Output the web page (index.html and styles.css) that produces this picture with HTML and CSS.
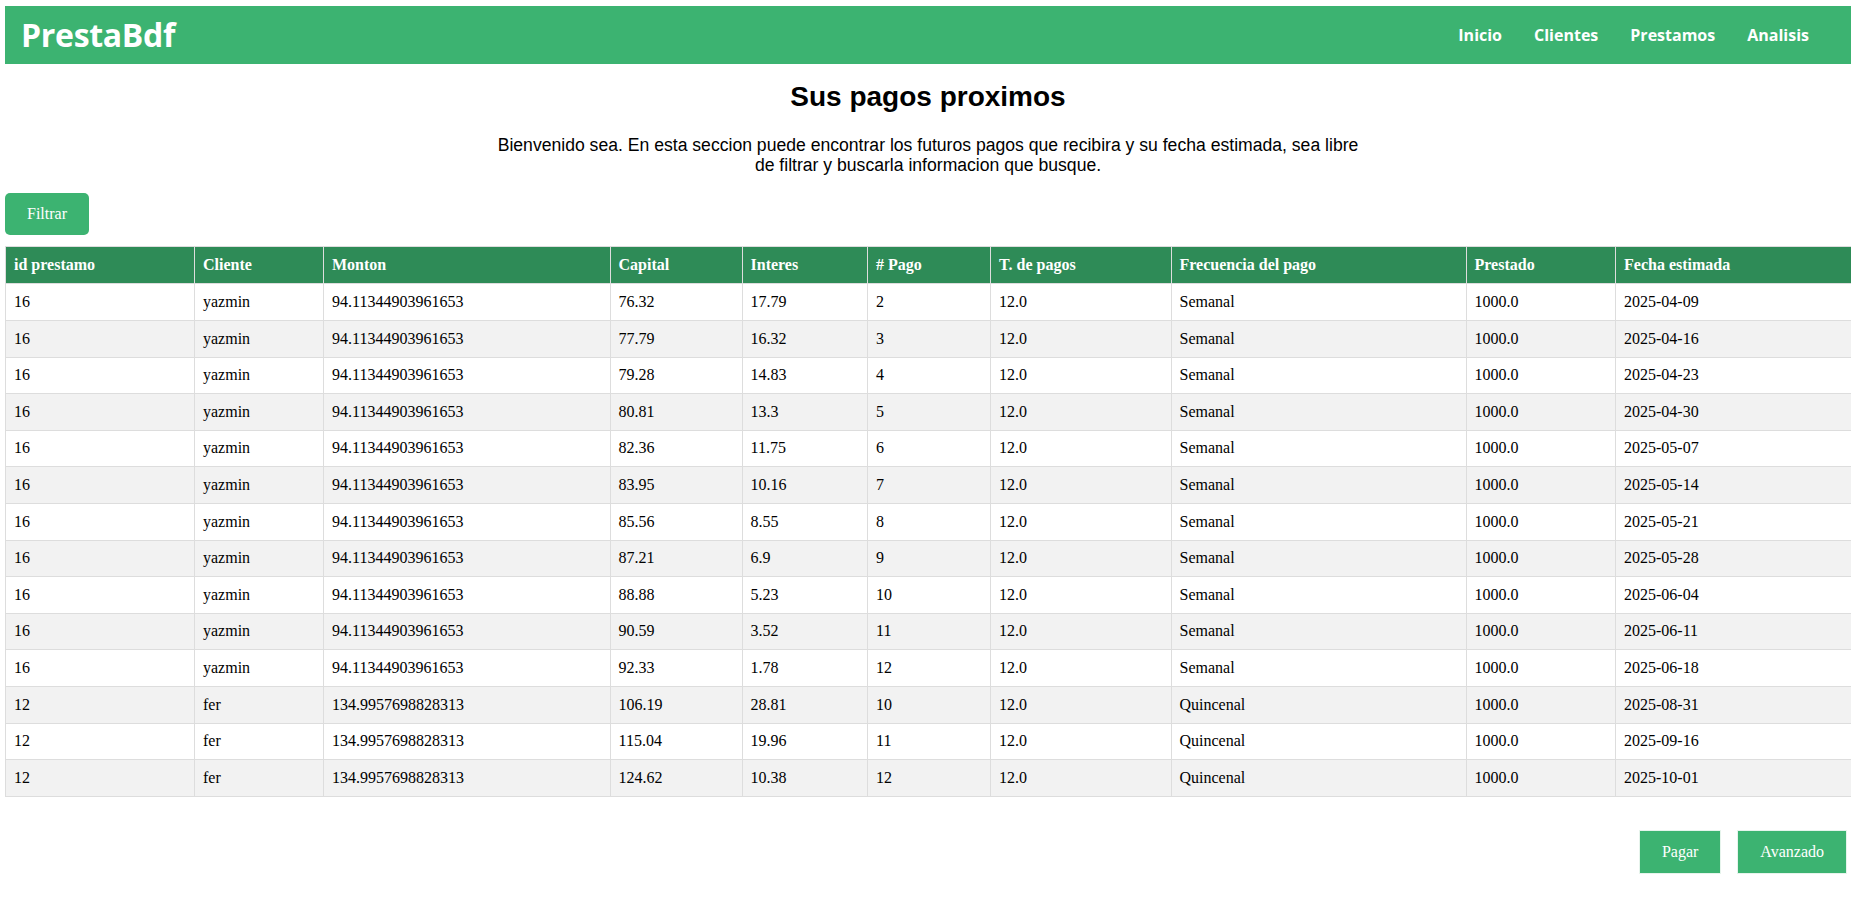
FILE: index.html
```html
<!DOCTYPE html>
<html lang="es">
<head>
<meta charset="utf-8">
<title>PrestaBdf</title>
<link rel="stylesheet" href="styles.css">
</head>
<body>
<header class="topbar">
  <div class="logo">PrestaBdf</div>
  <nav class="nav">
    <a href="#">Inicio</a>
    <a href="#">Clientes</a>
    <a href="#">Prestamos</a>
    <a href="#">Analisis</a>
  </nav>
</header>
<main>
  <section class="intro">
    <h1 class="title">Sus pagos proximos</h1>
    <p class="lead">Bienvenido sea. En esta seccion puede encontrar los futuros pagos que recibira y su fecha estimada, sea libre de filtrar y buscarla informacion que busque.</p>
  </section>
  <div class="toolbar"><button class="btn btn-round">Filtrar</button></div>
  <table class="pagos">
    <colgroup>
      <col class="c1"><col class="c2"><col class="c3"><col class="c4"><col class="c5"><col class="c6"><col class="c7"><col class="c8"><col class="c9"><col class="c10">
    </colgroup>
    <thead>
      <tr><th>id prestamo</th><th>Cliente</th><th>Monton</th><th>Capital</th><th>Interes</th><th># Pago</th><th>T. de pagos</th><th>Frecuencia del pago</th><th>Prestado</th><th>Fecha estimada</th></tr>
    </thead>
    <tbody>
      <tr><td>16</td><td>yazmin</td><td>94.11344903961653</td><td>76.32</td><td>17.79</td><td>2</td><td>12.0</td><td>Semanal</td><td>1000.0</td><td>2025-04-09</td></tr>
      <tr><td>16</td><td>yazmin</td><td>94.11344903961653</td><td>77.79</td><td>16.32</td><td>3</td><td>12.0</td><td>Semanal</td><td>1000.0</td><td>2025-04-16</td></tr>
      <tr><td>16</td><td>yazmin</td><td>94.11344903961653</td><td>79.28</td><td>14.83</td><td>4</td><td>12.0</td><td>Semanal</td><td>1000.0</td><td>2025-04-23</td></tr>
      <tr><td>16</td><td>yazmin</td><td>94.11344903961653</td><td>80.81</td><td>13.3</td><td>5</td><td>12.0</td><td>Semanal</td><td>1000.0</td><td>2025-04-30</td></tr>
      <tr><td>16</td><td>yazmin</td><td>94.11344903961653</td><td>82.36</td><td>11.75</td><td>6</td><td>12.0</td><td>Semanal</td><td>1000.0</td><td>2025-05-07</td></tr>
      <tr><td>16</td><td>yazmin</td><td>94.11344903961653</td><td>83.95</td><td>10.16</td><td>7</td><td>12.0</td><td>Semanal</td><td>1000.0</td><td>2025-05-14</td></tr>
      <tr><td>16</td><td>yazmin</td><td>94.11344903961653</td><td>85.56</td><td>8.55</td><td>8</td><td>12.0</td><td>Semanal</td><td>1000.0</td><td>2025-05-21</td></tr>
      <tr><td>16</td><td>yazmin</td><td>94.11344903961653</td><td>87.21</td><td>6.9</td><td>9</td><td>12.0</td><td>Semanal</td><td>1000.0</td><td>2025-05-28</td></tr>
      <tr><td>16</td><td>yazmin</td><td>94.11344903961653</td><td>88.88</td><td>5.23</td><td>10</td><td>12.0</td><td>Semanal</td><td>1000.0</td><td>2025-06-04</td></tr>
      <tr><td>16</td><td>yazmin</td><td>94.11344903961653</td><td>90.59</td><td>3.52</td><td>11</td><td>12.0</td><td>Semanal</td><td>1000.0</td><td>2025-06-11</td></tr>
      <tr><td>16</td><td>yazmin</td><td>94.11344903961653</td><td>92.33</td><td>1.78</td><td>12</td><td>12.0</td><td>Semanal</td><td>1000.0</td><td>2025-06-18</td></tr>
      <tr><td>12</td><td>fer</td><td>134.9957698828313</td><td>106.19</td><td>28.81</td><td>10</td><td>12.0</td><td>Quincenal</td><td>1000.0</td><td>2025-08-31</td></tr>
      <tr><td>12</td><td>fer</td><td>134.9957698828313</td><td>115.04</td><td>19.96</td><td>11</td><td>12.0</td><td>Quincenal</td><td>1000.0</td><td>2025-09-16</td></tr>
      <tr><td>12</td><td>fer</td><td>134.9957698828313</td><td>124.62</td><td>10.38</td><td>12</td><td>12.0</td><td>Quincenal</td><td>1000.0</td><td>2025-10-01</td></tr>
    </tbody>
  </table>
  <div class="actions">
    <button class="btn btn-square">Pagar</button>
    <button class="btn btn-square">Avanzado</button>
  </div>
</main>
</body>
</html>
```
FILE: styles.css
```css
html, body {
  overflow: hidden;
}
body {
  margin: 6px 0 0 5px;
  font-family: "Liberation Serif", "Times New Roman", serif;
  font-size: 16px;
  color: #000;
  background: #fff;
}
.topbar {
  height: 58px;
  background: #3cb371;
  display: flex;
  align-items: center;
  justify-content: space-between;
  padding: 0 42px 0 16px;
}
.logo {
  font-family: "Open Sans", "Noto Sans", sans-serif;
  font-weight: 700;
  font-size: 32px;
  color: #fff;
  letter-spacing: -0.3px;
  line-height: 1;
}
.nav {
  display: flex;
  gap: 32px;
}
.nav a {
  font-family: "Open Sans", "Noto Sans", sans-serif;
  font-weight: 700;
  font-size: 16px;
  color: #fff;
  text-decoration: none;
}
.intro {
  display: flex;
  flex-direction: column;
  align-items: center;
  text-align: center;
  font-family: "Liberation Sans", Arial, sans-serif;
}
.title {
  margin: 17px 0 0;
  font-size: 28px;
  font-weight: 700;
  line-height: 32px;
}
.lead {
  max-width: 880px;
  margin: 22px 0 0;
  font-size: 17.6px;
  line-height: 20px;
}
.toolbar {
  display: flex;
  margin-top: 18px;
}
.btn {
  font-family: "Liberation Serif", "Times New Roman", serif;
  font-size: 16px;
  color: #fff;
  background: #3cb371;
  cursor: pointer;
}
.btn-round {
  border: none;
  border-radius: 5px;
  height: 42px;
  padding: 0 22px;
}
.pagos {
  margin-top: 11px;
  width: 1846px;
  border-collapse: collapse;
  table-layout: fixed;
}
.c1 { width: 189px; }
.c2 { width: 129px; }
.c3 { width: 286.5px; }
.c4 { width: 132px; }
.c5 { width: 125.5px; }
.c6 { width: 123px; }
.c7 { width: 180.5px; }
.c8 { width: 295px; }
.c9 { width: 149.5px; }
.c10 { width: 236px; }
.pagos th, .pagos td {
  border: 1px solid #ddd;
  padding: 8.6px 8px;
  line-height: 18.4px;
  text-align: left;
  white-space: nowrap;
  overflow: hidden;
}
.pagos th {
  background: #2e8b57;
  color: #fff;
  font-weight: 700;
  padding-top: 9px;
  padding-bottom: 9px;
}
.pagos tbody tr:nth-child(even) {
  background: #f2f2f2;
}
.actions {
  display: flex;
  justify-content: flex-end;
  gap: 16px;
  margin-top: 33px;
  padding-right: 4px;
}
.btn-square {
  border: 1px solid #e6f4ec;
  border-radius: 0;
  height: 44px;
  padding: 0 22px;
}
```
